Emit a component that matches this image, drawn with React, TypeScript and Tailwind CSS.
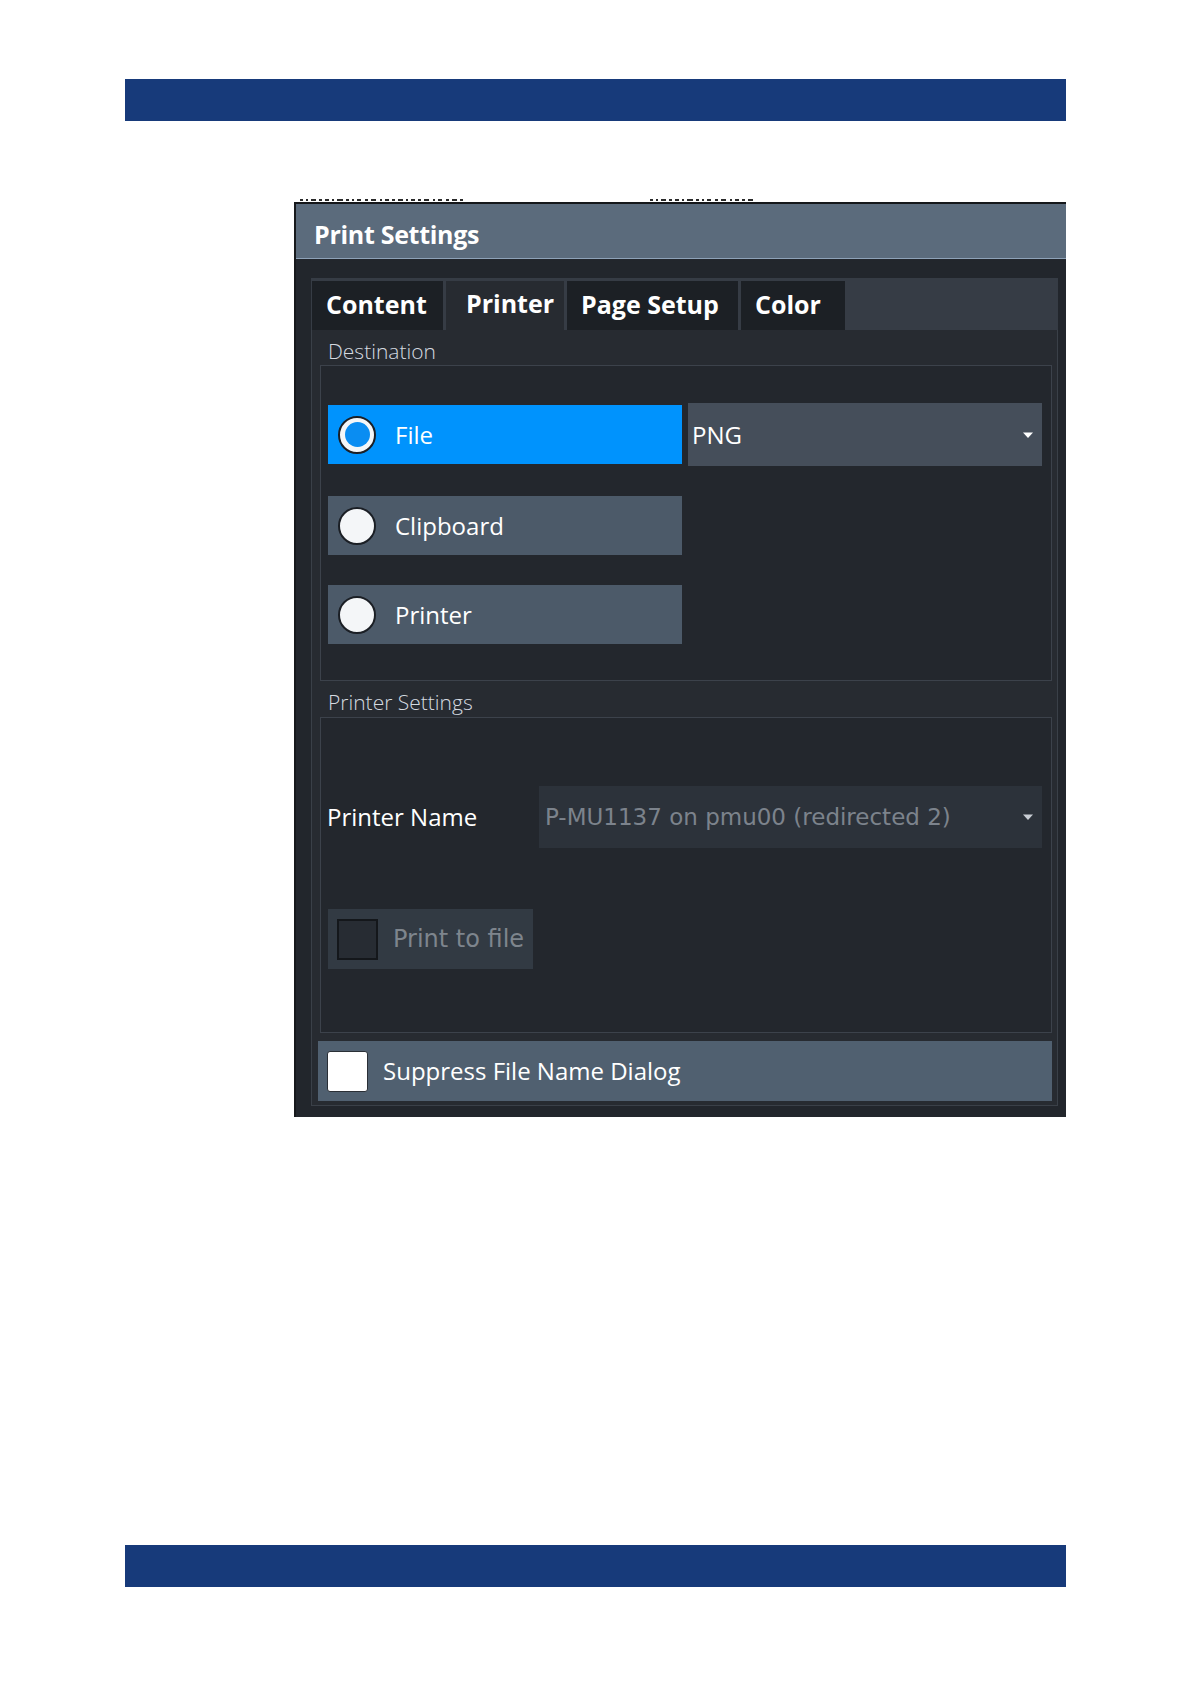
import React from 'react';

const ui = { fontFamily: '"Open Sans", "Noto Sans", sans-serif' };
const dv = { fontFamily: '"DejaVu Sans", "Liberation Sans", sans-serif' };

function Arrow({ color = '#ffffff' }: { color?: string }) {
  return (
    <svg width="12" height="8" viewBox="0 0 12 8" className="shrink-0">
      <path d="M1 1.5 L11 1.5 L6 7 Z" fill={color} />
    </svg>
  );
}

function Radio({ checked }: { checked?: boolean }) {
  return (
    <div className="w-[38px] h-[38px] rounded-full bg-[#f4f6f8] border-2 border-[#1b1f25] flex items-center justify-center shrink-0">
      {checked && <div className="w-[25px] h-[25px] rounded-full bg-[#0a8df2]" />}
    </div>
  );
}

function RadioRow({ label, checked }: { label: string; checked?: boolean }) {
  return (
    <div
      className={`w-[354px] h-[59px] flex items-center pl-[10px] gap-[19px] ${
        checked ? 'bg-[#0093fd]' : 'bg-[#4c5a69]'
      }`}
    >
      <Radio checked={checked} />
      <span className="text-[24px] text-white leading-none" style={ui}>
        {label}
      </span>
    </div>
  );
}

function Tab({ label, width, active }: { label: string; width: string; active?: boolean }) {
  return (
    <div
      className={`${width} h-[49px] flex pl-[14px] ${
        active ? 'bg-[#272b31] items-start pt-[5px] pl-[20px]' : 'bg-[#1c2025] items-center pb-[3px]'
      }`}
    >
      <span className="text-[25px] font-bold text-white leading-[34px]" style={ui}>
        {label}
      </span>
    </div>
  );
}

// bottoms of cut-off glyphs from the window behind the dialog
function Scraps() {
  const marks = [
    [4, 3], [10, 2], [15, 5], [23, 3], [29, 4], [36, 2], [41, 6], [50, 3], [56, 2], [61, 4],
    [69, 3], [75, 5], [84, 2], [89, 4], [96, 3], [102, 5], [110, 2], [115, 4], [122, 3],
    [128, 5], [137, 2], [142, 4], [150, 3], [156, 5], [164, 3],
  ];
  return (
    <div className="h-[5px] flex items-end">
      <div className="relative w-[180px] h-[5px] ml-[2px]">
        {marks.map(([x, w], i) => (
          <span key={i} className="absolute bottom-[1px] h-[2px] bg-[#2a2a2a]" style={{ left: x, width: w }} />
        ))}
      </div>
      <div className="relative w-[120px] h-[5px] ml-[170px]">
        {marks.slice(0, 16).map(([x, w], i) => (
          <span key={i} className="absolute bottom-[1px] h-[2px] bg-[#2a2a2a]" style={{ left: x, width: w }} />
        ))}
      </div>
    </div>
  );
}

export default function App() {
  return (
    <div className="w-[1191px] min-h-[1684px] bg-white flex flex-col">
      <div className="ml-[125px] mt-[79px] w-[941px] h-[42px] bg-[#173a7a]" />

      {/* dialog */}
      <div className="ml-[294px] mt-[76px] w-[772px] flex flex-col">
        <Scraps />
        <div className="h-[2px] bg-[#15171a]" />

        <div className="border-l-2 border-[#17191c] flex flex-col">
          <div className="h-[55px] bg-[#5b6b7c] border-b border-[#8ea2b8] flex items-center pl-[18px] pt-[7px]">
            <span className="text-[25px] font-bold text-white tracking-[-0.3px]" style={ui}>
              Print Settings
            </span>
          </div>

          <div className="bg-[#22262c] pt-[19px] pl-[15px] pr-[8px] pb-[11px] flex flex-col">
            {/* tabs */}
            <div className="h-[52px] bg-[#363c45] flex items-start pt-[3px] pl-[1px] gap-[3px]">
              <Tab label="Content" width="w-[131px]" />
              <Tab label="Printer" width="w-[118px]" active />
              <Tab label="Page Setup" width="w-[171px]" />
              <Tab label="Color" width="w-[104px]" />
            </div>

            {/* panel */}
            <div className="bg-[#272b31] border border-t-0 border-[#3a4048] pl-[8px] pr-[5px] pb-[4px] flex flex-col">
              <div className="h-[35px] flex items-end pl-[8px]">
                <span className="text-[21px] font-light text-[#d5dae0] leading-[28px]" style={ui}>
                  Destination
                </span>
              </div>
              <div className="h-[316px] border border-[#3c424b] bg-[#23272d] pl-[7px] pt-[37px] flex flex-col">
                <div className="flex items-center gap-[6px] h-[63px]">
                  <RadioRow label="File" checked />
                  <div className="w-[354px] h-[63px] bg-[#454e5a] flex items-center justify-between pl-[4px] pr-[8px]">
                    <span className="text-[24px] text-white" style={ui}>
                      PNG
                    </span>
                    <Arrow />
                  </div>
                </div>
                <div className="mt-[30px]">
                  <RadioRow label="Clipboard" />
                </div>
                <div className="mt-[30px]">
                  <RadioRow label="Printer" />
                </div>
              </div>

              <div className="h-[36px] flex items-end pb-[1px] pl-[8px]">
                <span className="text-[21px] font-light text-[#d5dae0] leading-[28px]" style={ui}>
                  Printer Settings
                </span>
              </div>
              <div className="h-[316px] border border-[#3c424b] bg-[#23272d] pl-[6px] pt-[68px] flex flex-col">
                <div className="flex items-center h-[62px]">
                  <span className="w-[212px] text-[24px] text-white" style={ui}>
                    Printer Name
                  </span>
                  <div className="w-[503px] h-[62px] bg-[#2c323a] flex items-center justify-between pl-[6px] pr-[8px]">
                    <span className="text-[23px] text-[#7c838c] whitespace-nowrap" style={dv}>
                      P-MU1137 on pmu00 (redirected 2)
                    </span>
                    <Arrow color="#c9ced4" />
                  </div>
                </div>
                <div className="mt-[61px] ml-[1px] w-[205px] h-[60px] bg-[#323a43] flex items-center pl-[9px] gap-[15px]">
                  <div className="w-[41px] h-[41px] bg-[#272c33] border-2 border-[#14171b] shrink-0" />
                  <span className="text-[24px] text-[#7e858d] whitespace-nowrap" style={dv}>
                    Print to file
                  </span>
                </div>
              </div>

              <div className="mt-[8px] -ml-[2px] w-[734px] h-[60px] bg-[#506070] flex items-center pl-[9px] gap-[15px]">
                <div className="w-[41px] h-[41px] bg-white border border-[#2a2f36] rounded-[3px] shrink-0" />
                <span className="text-[24px] text-white whitespace-nowrap" style={ui}>
                  Suppress File Name Dialog
                </span>
              </div>
            </div>
          </div>
        </div>
      </div>

      <div className="ml-[125px] mt-[428px] w-[941px] h-[42px] bg-[#173a7a]" />
    </div>
  );
}
